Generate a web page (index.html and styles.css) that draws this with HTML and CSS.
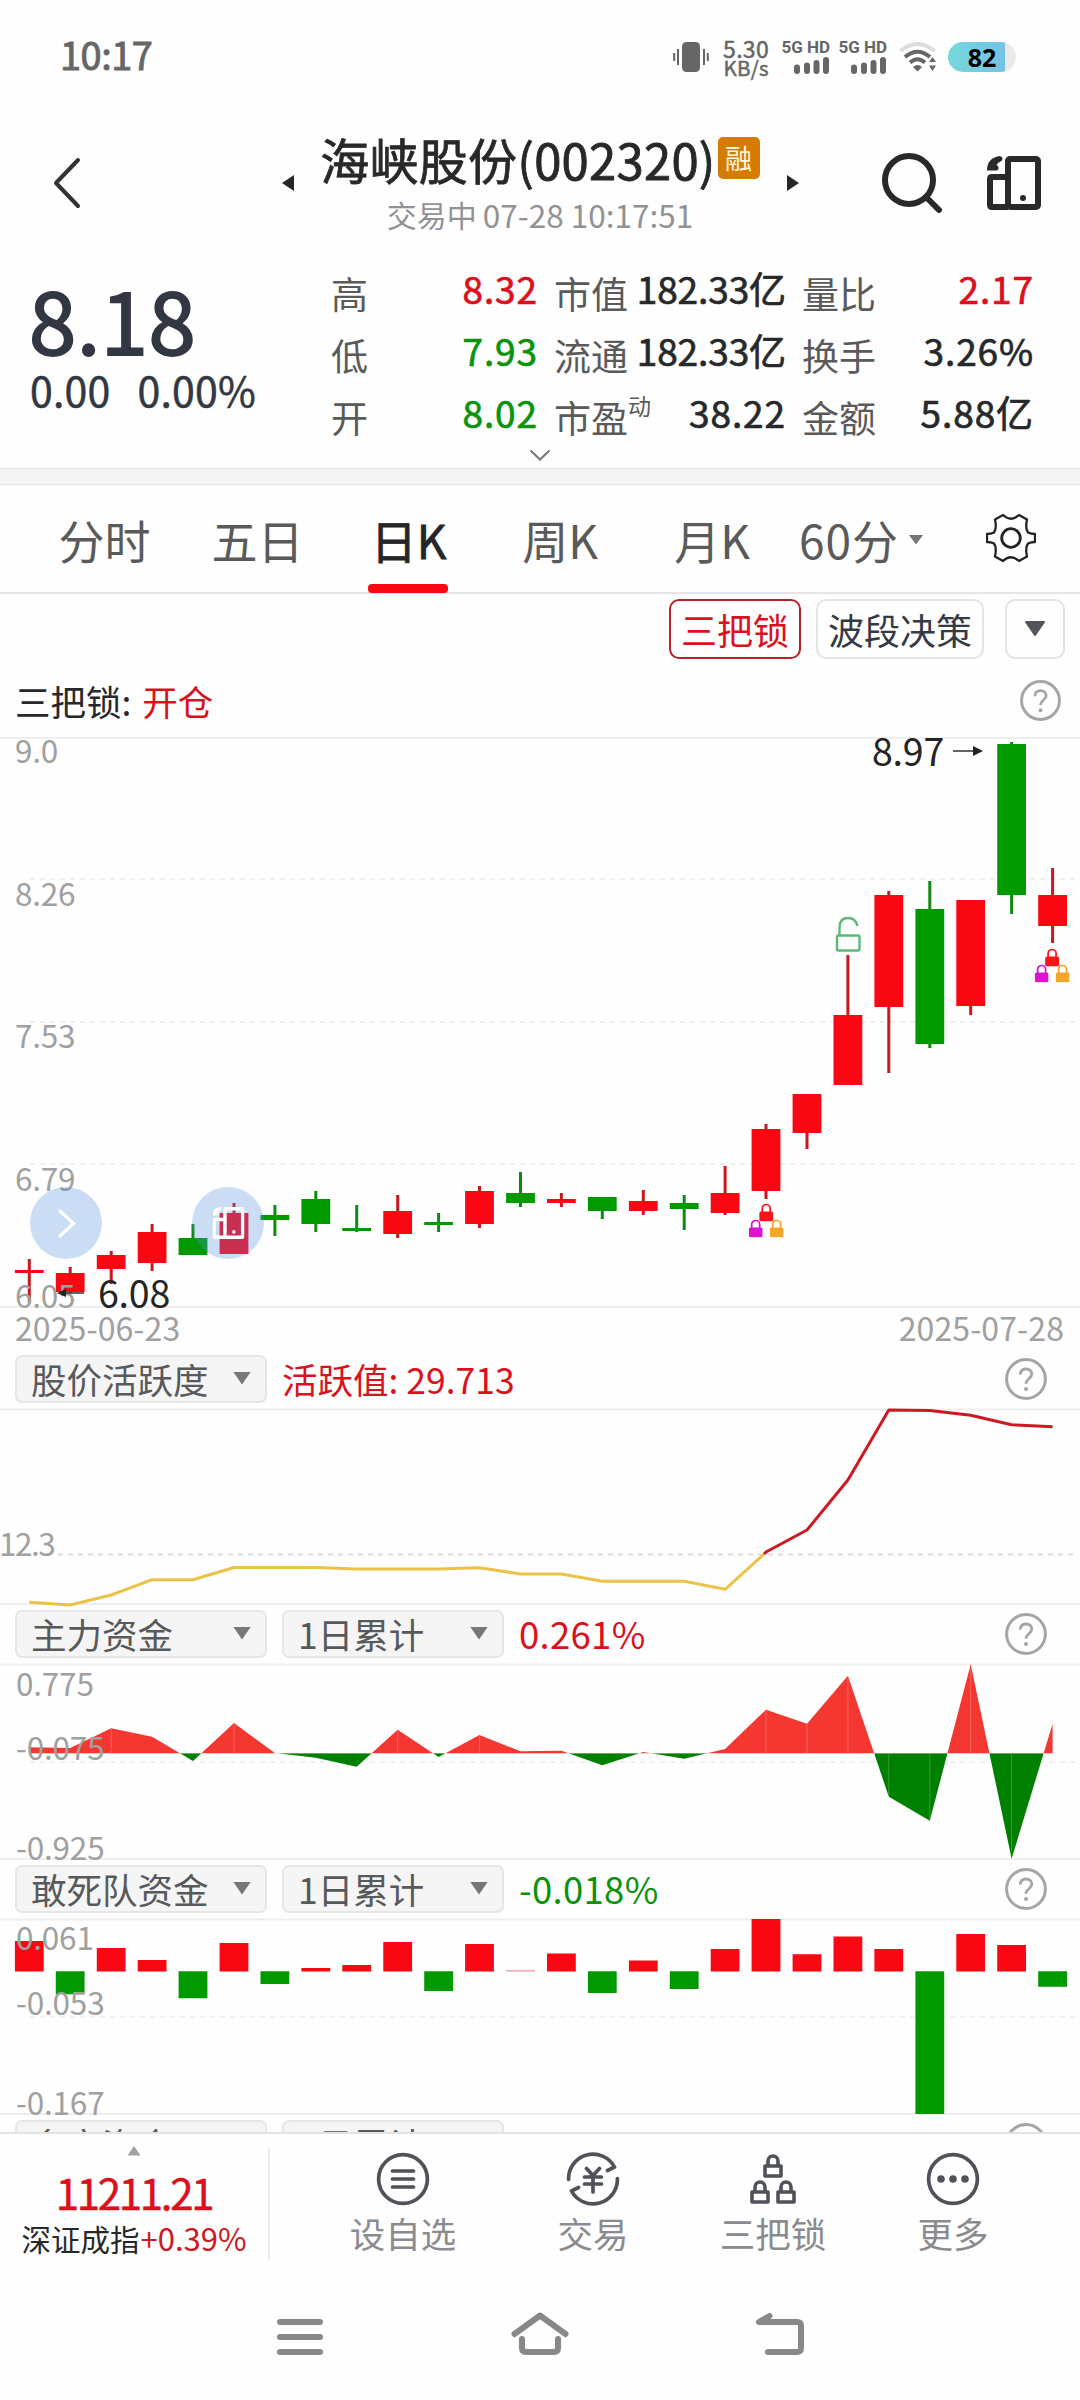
FILE: index.html
```html
<!DOCTYPE html>
<html lang="zh-CN">
<head>
<meta charset="utf-8">
<title>海峡股份 002320</title>
<link rel="stylesheet" href="styles.css">
</head>
<body>
<svg width="0" height="0" class="defs">
  <defs>
    <symbol id="help" viewBox="0 0 42 42"><circle cx="21" cy="21" r="19.400" fill="none" stroke="#a5a5a5" stroke-width="3"/><path d="M15.200 16.600C15.400 13 17.700 11 21 11c3.400 0 5.800 2 5.800 5.100 0 4.200-5.800 4.600-5.800 9.600" fill="none" stroke="#a5a5a5" stroke-width="2.800"/><circle cx="21" cy="31" r="2" fill="#a5a5a5"/></symbol>
    <symbol id="doors" viewBox="0 0 54 54"><g fill="none" stroke="currentColor" stroke-width="6" stroke-linejoin="round"><rect x="21" y="3" width="30" height="48" rx="2"/><path d="M21 21H5q-2 0-2 2v26q0 2 2 2h16"/></g><path d="M12.500 0q-12.500 2-12.500 14.500h9q2.500 0 2.500-2.500t-2-3q1.500-3 4-3.500 2-.5 2-2.700t-3-2.800z" fill="currentColor"/><circle cx="36" cy="42" r="3" fill="currentColor"/></symbol>
    <symbol id="solid-lock" viewBox="0 0 14 19"><path d="M3 11V6a4 4 0 0 1 8 0v5" fill="none" stroke="currentColor" stroke-width="1.700"/><rect y="9" width="14" height="10" rx="2" fill="currentColor"/></symbol>
    <symbol id="three-locks" viewBox="0 0 35 35"><use href="#solid-lock" x="10.500" y="0" width="14" height="19" color="#fb1318"/><use href="#solid-lock" x="0" y="16" width="14" height="19" color="#df12d2"/><use href="#solid-lock" x="21" y="16" width="14" height="19" color="#f4a52b"/></symbol>
    <symbol id="line-lock" viewBox="0 0 20 24"><path d="M5 11V7a5 5 0 0 1 10 0v4M2 12h16v10H2z" fill="none" stroke="#50525a" stroke-width="3.600" stroke-linejoin="round"/></symbol>
  </defs>
</svg>

<header class="status">
  <span class="clock">10:17</span>
  <div class="status-icons">
    <svg class="vibrate" width="36" height="32" viewBox="0 0 36 32"><rect x="9" y="1" width="18" height="30" rx="4.500" fill="#666"/><path d="M1.200 12v8M5 8v16M31 8v16M34.800 12v8" stroke="#666" stroke-width="2"/></svg>
    <div class="speed"><span>5.30</span><span class="unit">KB/s</span></div>
    <div class="sim"><span>5G HD</span><svg width="36" height="17" viewBox="0 0 36 17"><path d="M3 10.500v3.500M13 8.500V14M22.500 6V14M32 3V14" stroke="#666" stroke-width="6" stroke-linecap="round"/></svg></div>
    <div class="sim sim-b"><span>5G HD</span><svg width="36" height="17" viewBox="0 0 36 17"><path d="M3 10.500v3.500M13 8.500V14M22.500 6V14M32 3V14" stroke="#666" stroke-width="6" stroke-linecap="round"/></svg></div>
    <svg class="wifi" width="38" height="30" viewBox="0 0 38 30"><g fill="none" stroke-width="4"><path d="M1.500 9Q18.500-5 35.500 9" stroke="#dcdcdc"/><path d="M6 15Q18.500 4.500 31 15M11 20.500q7.500-6.500 15 0" stroke="#666"/></g><path d="M14 25q4.500-4 9 0l-4.500 4.500zM30 20l3.500-5 3.500 5zM30 23.500h7L33.500 29z" fill="#666"/></svg>
    <div class="battery"><span>82</span></div>
  </div>
</header>

<section class="title-bar">
  <svg class="back" width="30" height="54" viewBox="0 0 30 54"><path d="M26 4L4 27l22 23" fill="none" stroke="#333" stroke-width="4" stroke-linecap="round" stroke-linejoin="round"/></svg>
  <svg class="step" width="14" height="18" viewBox="0 0 14 18"><path d="M13 1v16L1 9z" fill="#262628"/></svg>
  <div class="title">
    <h1>海峡股份(002320)<b>融</b></h1>
    <p>交易中<span>07-28 10:17:51</span></p>
  </div>
  <svg class="step" width="14" height="18" viewBox="0 0 14 18"><path d="M1 1v16l12-8z" fill="#262628"/></svg>
  <svg class="search" width="62" height="62" viewBox="0 0 62 62"><circle cx="28" cy="28" r="24" fill="none" stroke="#28292b" stroke-width="6"/><path d="M45 45l13 13" stroke="#28292b" stroke-width="6" stroke-linecap="round"/></svg>
  <svg class="doors" width="54" height="54"><use href="#doors"/></svg>
</section>

<section class="quote">
  <div class="price">
    <strong>8.18</strong>
    <div class="change"><span>0.00</span><span>0.00%</span></div>
  </div>
  <dl class="stats">
    <div><dt>高</dt><dd class="up">8.32</dd></div><div><dt>市值</dt><dd class="wide">182.33亿</dd></div><div><dt>量比</dt><dd class="up">2.17</dd></div>
    <div><dt>低</dt><dd class="down">7.93</dd></div><div><dt>流通</dt><dd class="wide">182.33亿</dd></div><div><dt>换手</dt><dd>3.26%</dd></div>
    <div><dt>开</dt><dd class="down">8.02</dd></div><div><dt>市盈<sup>动</sup></dt><dd>38.22</dd></div><div><dt>金额</dt><dd>5.88亿</dd></div>
  </dl>
</section>
<div class="expand"><svg width="22" height="12" viewBox="0 0 22 12"><path d="M1.500 1.500L11 10.500l9.500-9" fill="none" stroke="#777" stroke-width="2"/></svg></div>
<div class="band"></div>

<nav class="tabs">
  <span>分时</span><span>五日</span><span class="active">日K</span><span>周K</span><span>月K</span>
  <span class="minutes">60分<svg width="16" height="10" viewBox="0 0 16 10"><path d="M1 0h14L8 9.500z" fill="#777"/></svg></span>
  <svg class="gear" width="50" height="50" viewBox="-25 -25 50 50"><g fill="none" stroke="#222" stroke-width="2.300" stroke-linejoin="round"><circle r="9.300" stroke-width="2.800"/><path d="M-8-23q8 7.500 16 0l8 4.500Q14-9.500 17-5.500 20-4 24-4v8q-4 0-7 1.500-3 4-1 13L8 23q-8-7.500-16 0l-8-4.500q2-9-1-13Q-20 4-24 4v-8q4 0 7-1.500 3-4 1-13z"/></g></svg>
</nav>

<div class="strategies">
  <span class="chip on">三把锁</span><span class="chip">波段决策</span>
  <span class="chip more"><svg width="22" height="16" viewBox="0 0 22 16"><path d="M2 1h18L11 14z" fill="#52545c" stroke="#52545c" stroke-width="2" stroke-linejoin="round"/></svg></span>
</div>
<div class="signal"><span>三把锁: <em>开仓</em></span><svg width="41" height="41"><use href="#help"/></svg></div>

<main class="panels">
  <svg class="chart" width="1080" height="618" viewBox="0 737 1080 618">
    <g stroke="#eeeeee" stroke-width="2"><path d="M0 738h1080M0 1307h1080"/><path d="M30 879h1045M30 1022h1045M30 1164h1045" stroke-dasharray="5 5"/></g>
    <g fill="none" stroke="#c91820" stroke-width="3">
      <path d="M29.300 1259v43M70.200 1267v26M111.200 1251v33M152.100 1224v47M234 1203v12M397.700 1195v43M479.500 1186v42M561.400 1193v14M643.300 1190v25M725.100 1166v49M766 1124v75M807 1095v54M847.900 955v70M888.800 891v182M970.700 901v114M1052.600 868v75"/>
    </g>
    <path d="M193 1224v20M274.900 1205v31M315.800 1191v41M356.700 1205v27M438.600 1213v19M520.500 1172v35M602.300 1197v22M684.200 1195v35M929.800 881v167M1011.600 742v172" fill="none" stroke="#118a11" stroke-width="3"/>
    <path d="M29.300 1270v3M70.200 1273v19M111.200 1255v14M152.100 1232v31M234 1213v41M397.700 1211v23M479.500 1191v33M561.400 1199v4M643.300 1201v10M725.100 1193v20M766 1129v62M807 1094v39M847.900 1015v70M888.800 895v112M970.700 900v106M1052.600 895v31" fill="none" stroke="#f90712" stroke-width="28.800"/>
    <path d="M193 1238v17M274.900 1215v5M315.800 1199v25M356.700 1228v3M438.600 1222v3M520.500 1193v10M602.300 1197v14M684.200 1203v6M929.800 909v135M1011.600 744v151" fill="none" stroke="#009900" stroke-width="28.800"/>
    <g fill="none" stroke="#5db978" stroke-width="2.400"><rect x="837" y="935.500" width="22.500" height="15" rx="1.500"/><path d="M839.500 935v-7q0-10 8.500-10 7.500 0 9.500 8"/></g>
    <use href="#three-locks" x="748.700" y="1202.500" width="35" height="35"/>
    <use href="#three-locks" x="1034.600" y="947.500" width="35" height="35"/>
    <g class="axis"><text x="15" y="763">9.0</text><text x="15" y="906">8.26</text><text x="15" y="1048">7.53</text><text x="15" y="1191">6.79</text><text x="15" y="1308">6.05</text></g>
    <g class="dates"><text x="15" y="1341">2025-06-23</text><text x="1064" y="1341" text-anchor="end">2025-07-28</text></g>
    <path d="M953 751h20M60 1293h24" stroke="#333" stroke-width="1.600"/><path d="M973 746l10 5-10 5zM66 1289l-9 4 9 4z" fill="#222"/>
    <g class="marks"><text x="872" y="766">8.97</text><text x="98" y="1308">6.08</text></g>
    <g fill="rgba(85,142,225,.3)"><circle cx="66" cy="1223" r="36"/><circle cx="228" cy="1223" r="36"/></g>
    <path d="M60 1211l13.500 12.500L60 1236" fill="none" stroke="#fff" stroke-width="3.200" stroke-linecap="round"/>
    <use href="#doors" x="212.500" y="1207" width="32" height="32" color="#fff"/>
  </svg>

  <div class="panel-head"><span class="select">股价活跃度<i></i></span><span class="value up">活跃值: 29.713</span><svg width="42" height="42"><use href="#help"/></svg></div>
  <svg class="chart" width="1080" height="201" viewBox="0 1409 1080 201">
    <path d="M0 1409.500h1080M0 1604h1080" stroke="#eeeeee" stroke-width="2"/>
    <path d="M58 1554.500h1020" stroke="#e2e2e2" stroke-width="2.500" stroke-dasharray="5 5"/>
    <g class="axis tight"><text x="-1" y="1556">12.3</text></g>
    <g fill="none" stroke-width="3" stroke-linejoin="round"><path stroke="#eac248" d="M29.300 1602.300L70.200 1605 111.200 1595 152.100 1579.700H193L234 1567.500H315.800L356.700 1569H438.600L479.500 1567.700 520.500 1574H561.400L602.300 1581.300H684.200L725.100 1589.300 764 1554"/><path stroke="#cd1922" d="M764 1554L766 1552 807 1530 847.900 1480 888.800 1410 929.800 1410.500 970.700 1415.300 1011.600 1424.700 1052.600 1426.700"/></g>
  </svg>

  <div class="panel-head"><span class="select">主力资金<i></i></span><span class="select period">1日累计<i></i></span><span class="value up">0.261%</span><svg width="42" height="42"><use href="#help"/></svg></div>
  <svg class="chart" width="1080" height="201" viewBox="0 1664 1080 201">
    <defs><clipPath id="inflow"><path d="M0 1660h1080v93.300H0z"/></clipPath><clipPath id="outflow"><path d="M0 1753.300h1080V1865H0z"/></clipPath>
    <path id="flow" d="M29.300 1753.300V1747.300L70.200 1748 111.200 1728.300 152.100 1736.700 193 1761 234 1723 274.900 1753 315.800 1757.700 356.700 1766.700 397.700 1729.700 438.600 1757 479.500 1735 520.500 1751.300 561.400 1750.700 602.300 1765.300 643.300 1752 684.200 1758.700 725.100 1749 766 1709.700 807 1723.700 847.900 1675.700 888.800 1796.700 929.800 1820.700 970.700 1664.300 1011.600 1858.700 1052.600 1723.700V1753.300z"/></defs>
    <path d="M0 1664.500h1080M0 1859h1080" stroke="#eeeeee" stroke-width="2"/><path d="M30 1762h1048" stroke="#efefef" stroke-width="2" stroke-dasharray="5 5"/>
    <use href="#flow" fill="#f53731" clip-path="url(#inflow)"/><use href="#flow" fill="#008000" clip-path="url(#outflow)"/>
    <path d="M111.200 1729v24M234 1724v29M397.700 1731v22M479.500 1736v17M766 1711v42M807 1724v29M847.900 1677v76M970.700 1668v85M888.800 1754v42M929.800 1754v65M1011.600 1754v98" stroke="#fff" stroke-opacity=".22"/>
    <g class="axis"><text x="16" y="1695.500">0.775</text><text x="16" y="1760">-0.075</text><text x="16" y="1860">-0.925</text></g>
  </svg>

  <div class="panel-head"><span class="select">敢死队资金<i></i></span><span class="select period">1日累计<i></i></span><span class="value down">-0.018%</span><svg width="42" height="42"><use href="#help"/></svg></div>
  <svg class="chart" width="1080" height="201" viewBox="0 1919 1080 201">
    <path d="M0 1919.500h1080M0 2114h1080" stroke="#eeeeee" stroke-width="2"/><path d="M30 2017h1048" stroke="#efefef" stroke-width="2" stroke-dasharray="5 5"/>
    <path d="M29.300 1941V1971.500M111.200 1948V1971.500M152.100 1960V1971.500M234 1943V1971.500M315.800 1968V1971.500M356.700 1965V1971.500M397.700 1942V1971.500M479.500 1944V1971.500M561.400 1953.500V1971.500M643.300 1960.500V1971.500M725.100 1949V1971.500M766 1919V1971.500M807 1954.300V1971.500M847.900 1936.500V1971.500M888.800 1949V1971.500M970.700 1934V1971.500M1011.600 1945V1971.500" stroke="#f90712" stroke-width="28.800"/>
    <path d="M506 1970.800h29" stroke="#f4a0a4" stroke-width="1.400"/>
    <path d="M70.200 1971.300V1994.300M193 1971.300V1998.300M274.900 1971.300V1984M438.600 1971.300V1991M602.300 1971.300V1993M684.200 1971.300V1989M929.800 1971.300V2114M1052.600 1971.300V1986.700" stroke="#009900" stroke-width="28.800"/>
    <g class="axis"><text x="16" y="1950">0.061</text><text x="16" y="2015">-0.053</text><text x="16" y="2115">-0.167</text></g>
  </svg>

  <div class="panel-head"><span class="select">多空资金<i></i></span><span class="select period">1日累计<i></i></span><span class="value up">0.210%</span><svg width="42" height="42"><use href="#help"/></svg></div>
</main>

<footer class="toolbar">
  <div class="index"><svg width="14" height="10" viewBox="0 0 14 10"><path d="M7 0l6.500 9.500H.500z" fill="#a2a2a2"/></svg><strong>11211.21</strong><p>深证成指<em>+0.39%</em></p></div>
  <div class="tool"><svg width="54" height="54" viewBox="-27 -27 54 54"><g fill="none" stroke="#50525a" stroke-width="3.700" stroke-linecap="round"><circle r="24.400"/><path d="M-10.500-8h21M-10.500 0h21M-10.500 8h21"/></g></svg><span>设自选</span></div>
  <div class="tool"><svg width="54" height="54" viewBox="-27 -27 54 54"><g fill="none" stroke="#50525a" stroke-width="3.700" stroke-linecap="round" stroke-linejoin="round"><path d="M-24.400.500A24.400 24.400 0 0 1 21.500-12L14.500-8.500M24.400-.500A24.400 24.400 0 0 1-21.500 12L-14.500 8.500M-6.500-10.500L0-3.500 6.500-10.500M0-3.500V13M-8.500-2H8.500M-8.500 5H8.500"/></g></svg><span>交易</span></div>
  <div class="tool"><svg width="54" height="54" viewBox="-27 -27 54 54"><use href="#line-lock" x="-10" y="-25" width="20" height="24"/><use href="#line-lock" x="-23" y="1" width="20" height="24"/><use href="#line-lock" x="3" y="1" width="20" height="24"/></svg><span>三把锁</span></div>
  <div class="tool"><svg width="54" height="54" viewBox="-27 -27 54 54"><circle r="24.400" fill="none" stroke="#50525a" stroke-width="3.700"/><g fill="#50525a"><circle cx="-12" r="3.800"/><circle r="3.800"/><circle cx="12" r="3.800"/></g></svg><span>更多</span></div>
</footer>

<nav class="system">
  <svg width="60" height="60" viewBox="-30 -30 60 60"><path d="M-20-15h40M-20 0h40M-20 15h40"/></svg>
  <svg width="60" height="60" viewBox="-30 -30 60 60"><path d="M-25.500-3L0-21.500 25.500-3M-18 2v9q0 4 4 4h28q4 0 4-4V2"/></svg>
  <svg width="60" height="60" viewBox="-30 -30 60 60"><path d="M-10.500-21L-21-15h38q4 0 4 4v22q0 4-4 4h-29"/></svg>
</nav>
</body>
</html>
```
FILE: styles.css
```css
* { box-sizing: border-box; }
body {
  margin: 0;
  width: 1080px;
  height: 2400px;
  overflow: hidden;
  background: #fefefe;
  color: #27282a;
  font-family: "Noto Sans CJK SC", "Noto Sans", sans-serif;
  white-space: nowrap;
}
svg { display: block; flex: none; }
h1, p, dl, dd { margin: 0; }
em, i { font-style: normal; }
.defs { display: none; }
.up { color: #dc101c; }
.down { color: #0b930b; }

.status {
  display: flex;
  justify-content: space-between;
  align-items: center;
  height: 114px;
  padding: 0 64px 0 60px;
  color: #666;
}
.clock { font-size: 38px; line-height: 40px; margin-top: -6px; -webkit-text-stroke: .9px; letter-spacing: -.5px; }
.status-icons { display: flex; align-items: center; }
.speed { width: 49px; margin-left: 11px; display: flex; flex-direction: column; text-align: right; font-size: 23px; line-height: 19px; letter-spacing: .3px; -webkit-text-stroke: .5px; }
.speed .unit { font-size: 20.5px; line-height: 18px; }
.sim { width: 49px; margin-left: 12px; display: flex; flex-direction: column; align-items: flex-end; font: 700 17px/15px "Roboto", sans-serif; }
.sim svg { margin-top: 2px; }
.sim-b { margin-left: 8px; }
.wifi { margin-left: 12px; }
.battery {
  width: 68px;
  height: 30px;
  margin-left: 11px;
  border-radius: 15px;
  background: linear-gradient(90deg, #76d8dc, #74c1e5 57px, #e9e9e9 57px);
  color: #000;
  font: 700 25px/30px "Noto Sans", sans-serif;
  text-align: center;
}

.title-bar { display: flex; align-items: flex-start; height: 136px; padding-left: 52px; }
.back { margin-top: 42px; }
.step { margin-top: 60px; }
.back + .step { margin-left: 199px; }
.title { width: 468px; margin: 12px 12px 0 11px; text-align: center; }
.title + .step { margin-left: 0; }
.title h1 { display: flex; justify-content: center; align-items: center; height: 66px; font-size: 49px; font-weight: 400; -webkit-text-stroke: .8px; line-height: 66px; letter-spacing: .25px; }
.title h1 b { width: 42px; height: 42px; margin: -2px 0 0 2px; border-radius: 5px; background: #d57c00; color: #fff8e0; font-size: 27px; font-weight: 400; line-height: 42px; -webkit-text-stroke: 0; }
.title p { display: flex; justify-content: center; gap: 6px; margin-top: 2px; color: #929294; font-size: 30px; line-height: 40px; }
.title p span { font-size: 31.500px; }
.search { margin: 38px 0 0 81px; }
.title-bar .doors { margin: 42px 0 0 44px; color: #28292b; }

.quote { display: flex; height: 196px; }
.price { width: 328px; padding-left: 29px; color: #323743; }
.price strong { display: block; margin-top: 12px; height: 102px; font-size: 85px; line-height: 112px; font-weight: 400; -webkit-text-stroke: 2px; letter-spacing: .5px; }
.change { display: flex; gap: 27px; margin-left: 1px; font-size: 41px; line-height: 50px; letter-spacing: .2px; -webkit-text-stroke: .5px; }
.stats { display: grid; grid-template-columns: 210px 248px 248px; column-gap: 0; grid-auto-rows: 62px; padding-top: 6px; }
.stats div { display: flex; justify-content: space-between; padding-left: 3px; font-size: 37px; line-height: 62px; }
.stats div:nth-child(3n+2) , .stats div:nth-child(3n) { padding-left: 16px; }
.stats dt { color: #5a5a5a; font-size: 37px; margin-top: 6px; -webkit-text-stroke: 0; }
.stats dd { margin-top: 1px; letter-spacing: .9px; -webkit-text-stroke: .7px; }
.stats .wide { letter-spacing: -.1px; }
.stats sup { font-size: 23px; line-height: 20px; vertical-align: 18px; }
.expand { height: 22px; display: flex; justify-content: center; padding-top: 3px; }
.band { height: 17px; background: #f4f4f4; border: solid #e4e4e4; border-width: 1px 0; }

.tabs { display: grid; grid-template-columns: 155px 151px 151px 152px 152px 166px 155px; height: 109px; padding-left: 27px; border-bottom: 2px solid #e5e5e5; font-size: 46px; line-height: 106px; color: #5a5a5a; width: 1080px; }
.tabs span { display: flex; justify-content: center; align-items: center; }
.tabs .active { position: relative; color: #262628; -webkit-text-stroke: .8px; }
.tabs .active::after { content: ""; position: absolute; left: 35px; bottom: -1px; width: 80px; height: 9px; border-radius: 4px; background: #f90712; }
.tabs .minutes { justify-content: flex-start; padding-left: 11px; letter-spacing: 1px; }
.tabs span svg { margin: 2px 0 0 9px; }
.gear { margin: 28px 0 0 32px; }

.strategies { display: flex; justify-content: flex-end; height: 70px; padding: 5px 15px 0 0; }
.chip { display: flex; align-items: center; justify-content: center; width: 168px; height: 60px; border: 2px solid #e4e4e4; border-radius: 10px; color: #343a46; font-size: 36px; line-height: 50px; }
.chip.on { width: 132px; margin-right: 15px; border-color: #b8202b; color: #dc101c; }
.chip.more { width: 60px; margin-left: 21px; }
.signal { display: flex; justify-content: space-between; align-items: center; height: 73px; padding: 0 19px 0 15px; font-size: 35.500px; }
.signal em { color: #dc101c; margin-left: 3px; }

.panels { height: 1395px; overflow: hidden; }
.chart { overflow: visible; }
.chart text { font-size: 31.500px; fill: #a0a0a0; letter-spacing: -.2px; }
.chart .tight text { letter-spacing: -1.500px; }
.chart .dates text { font-size: 32px; letter-spacing: .1px; }
.chart .marks text { font-size: 37.500px; fill: #242424; }
.panel-head { display: flex; align-items: center; height: 54px; padding: 0 33px 6px 15px; }
.select { display: flex; align-items: center; justify-content: space-between; flex: none; width: 252px; height: 48px; padding: 0 14px; border: 2px solid #e6e6e6; border-radius: 7px; background: #f5f5f5; color: #58595b; font-size: 35.500px; line-height: 44px; }
.period { width: 222px; margin-left: 15px; }
.select i { width: 18px; height: 13px; background: #777; clip-path: polygon(0 0, 100% 0, 50% 100%); margin-top: -2px; }
.value { flex: 1; margin-left: 15px; font-size: 35.500px; line-height: 44px; }
.period + .value { font-size: 36.500px; letter-spacing: .3px; }

.toolbar { display: grid; grid-template-columns: 308px 190px 190px 170px 190px; height: 138px; border-top: 2px solid #e3e3e3; background: #fefefe; }
.index { display: flex; flex-direction: column; align-items: center; width: 270px; height: 112px; margin-top: 14px; border-right: 2px solid #ebebeb; }
.index svg { margin-top: -2px; }
.index strong { margin-top: 6px; color: #dc101c; font-size: 42px; line-height: 60px; font-weight: 400; letter-spacing: -2.300px; -webkit-text-stroke: .5px; }
.index p { font-size: 29.500px; line-height: 38px; margin-top: -3px; }
.index em { margin-left: 1px; color: #cf1822; font-size: 31px; }
.tool { display: flex; flex-direction: column; align-items: center; padding-top: 18px; color: #8a8b8e; font-size: 35.500px; }
.tool span { line-height: 50px; margin-top: 2px; }
.system { display: flex; justify-content: center; gap: 180px; padding-top: 37px; }
.system path { fill: none; stroke: #888; stroke-width: 6; stroke-linecap: round; stroke-linejoin: round; }
```
